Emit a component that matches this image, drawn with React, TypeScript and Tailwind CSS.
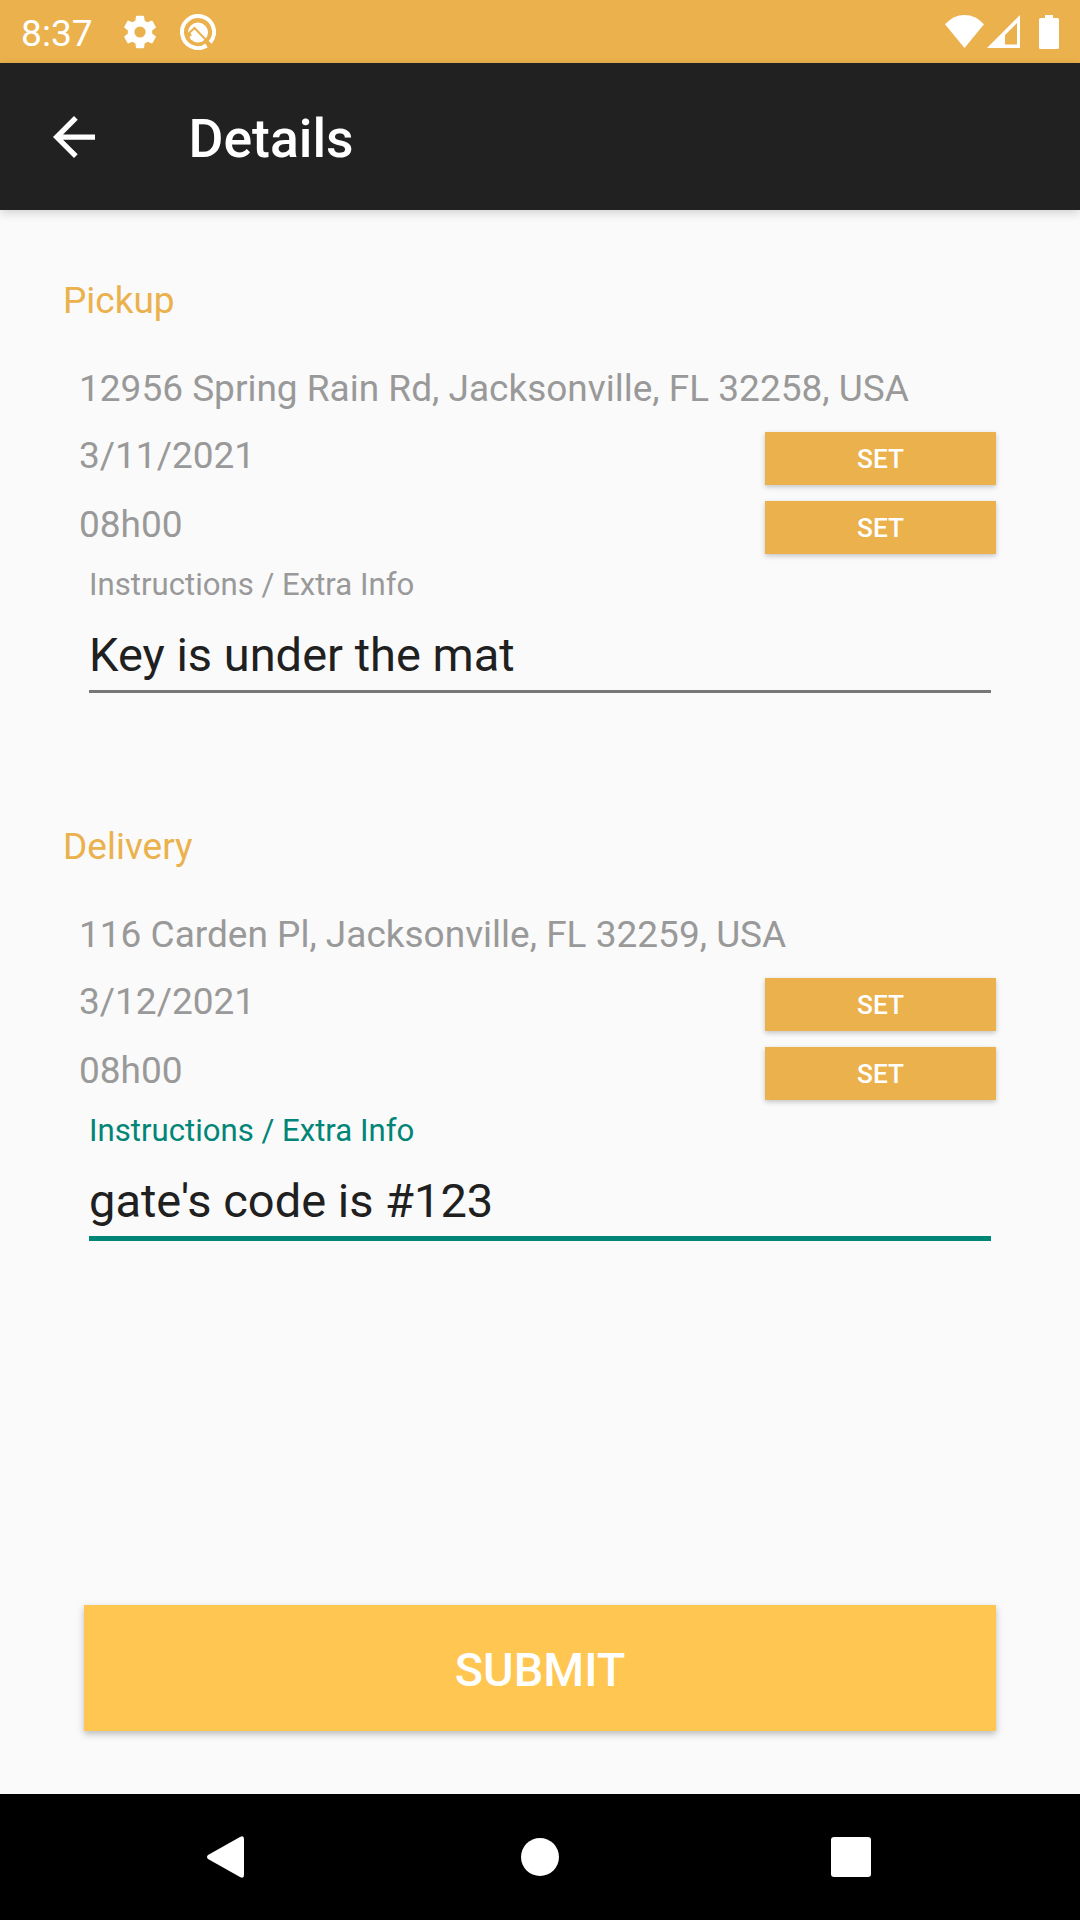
import React from 'react';

type Section = { title: string; address: string; date: string; time: string; note: string; active?: boolean };

const sections: Section[] = [
  { title: 'Pickup', address: '12956 Spring Rain Rd, Jacksonville, FL 32258, USA', date: '3/11/2021', time: '08h00', note: 'Key is under the mat' },
  { title: 'Delivery', address: '116 Carden Pl, Jacksonville, FL 32259, USA', date: '3/12/2021', time: '08h00', note: "gate's code is #123", active: true },
];

function SetButton() {
  return (
    <button className="h-[53px] w-[231px] bg-[#eab14d] pt-[2px] text-[26.25px] leading-[51px] font-medium text-white shadow-[0_2px_5px_rgba(0,0,0,0.22)]">SET</button>
  );
}

function Block({ title, address, date, time, note, active }: Section) {
  return (
    <section className="h-[546px] text-[37px] leading-[43px] text-[#999]">
      <h2 className="pl-[63px] text-[#eab14d]">{title}</h2>
      <p className="mt-[45px] pl-[79px] whitespace-nowrap">{address}</p>
      <div className="mt-[22px] flex h-[53px] justify-between pr-[84px] pl-[79px]"><span className="pt-[2px]">{date}</span><SetButton /></div>
      <div className="mt-[16px] flex h-[53px] justify-between pr-[84px] pl-[79px]"><span className="pt-[2px]">{time}</span><SetButton /></div>
      <div className="mr-[89px] ml-[89px]">
        <div className={active ? 'mt-[12px] text-[31.15px] leading-[37px] text-[#018577]' : 'mt-[12px] text-[31.15px] leading-[37px]'}>Instructions / Extra Info</div>
        <div className={active ? 'mt-[24px] h-[68px] border-b-[5px] border-[#018577] text-[47px] leading-[55px] text-[#202020]' : 'mt-[24px] h-[66px] border-b-[3px] border-[#777] text-[47px] leading-[55px] text-[#202020]'}>{note}</div>
      </div>
    </section>
  );
}

export default function App() {
  return (
    <main className="flex h-[1920px] w-[1080px] flex-col overflow-hidden bg-[#fafafa] font-['Roboto',sans-serif]">
      <header className="flex h-[63px] items-center bg-[#eab14d] pr-[21px] pl-[21px] text-white">
        <span className="w-[102px] pt-[4px] text-[37.2px] leading-[59px]">8:37</span>
        <svg width="34" height="34" viewBox="2 2 20 20" fill="#fff"><path d="M19.14 12.94c.04-.3.06-.61.06-.94s-.02-.64-.07-.94l2.03-1.58a.49.49 0 0 0 .12-.61l-1.92-3.32a.49.49 0 0 0-.59-.22l-2.39.96a7 7 0 0 0-1.62-.94L14.4 2.81a.48.48 0 0 0-.48-.41h-3.84c-.24 0-.43.17-.47.41l-.36 2.54c-.59.24-1.13.57-1.62.94l-2.39-.96c-.22-.08-.47 0-.59.22L2.74 8.87c-.12.21-.08.47.12.61l2.03 1.58a6 6 0 0 0 0 1.88l-2.03 1.58a.49.49 0 0 0-.12.61l1.92 3.32c.12.22.37.29.59.22l2.39-.96c.5.38 1.03.7 1.62.94l.36 2.54c.05.24.24.41.48.41h3.84c.24 0 .44-.17.47-.41l.36-2.54c.59-.24 1.13-.56 1.62-.94l2.39.96c.22.08.47 0 .59-.22l1.92-3.32a.49.49 0 0 0-.12-.61zM12 15.3a3.3 3.3 0 1 1 0-6.6 3.3 3.3 0 0 1 0 6.600z"/></svg>
        <svg className="ml-[23px]" width="36" height="36" viewBox="0 0 36 36" fill="none">
          <path d="M26.5 31.600A16 16 0 1 1 30.2 28.400" stroke="#fff" strokeWidth="4"/>
          <path d="M23 30.500l2.500-.5 2 3.500-3 1z" fill="#fff"/>
          <circle cx="18" cy="18.500" r="10" fill="#fff"/>
          <path d="M6 22l8.500-8L28 28" stroke="#eab14d" strokeWidth="2"/>
          <path d="M7 25l5-4-3-3z" fill="#eab14d"/>
        </svg>
        <svg className="ml-auto" width="39" height="33" viewBox="0 0 39 33" fill="#fff"><path d="M0 9.300Q8.500 0 19.500 0T39 9.300L19.500 33z"/></svg>
        <svg className="ml-[3px]" width="33" height="33" viewBox="0 0 33 33" fill="#fff"><path d="M33 0v33H0zM30 8 18 20v9.500h12z" fillRule="evenodd"/></svg>
        <svg className="ml-[19px]" width="20" height="34" viewBox="0 0 20 34" fill="#fff"><path d="M6 0h8v3h4.500q1.500 0 1.500 1.500v28q0 1.500-1.500 1.500h-17q-1.500 0-1.500-1.500v-28q0-1.500 1.500-1.500H6z"/></svg>
      </header>
      <nav className="flex h-[147px] items-center bg-[#212121] pl-[52.5px] text-white shadow-[0_3px_9px_rgba(0,0,0,0.16)]">
        <svg width="42" height="42" viewBox="4 4 16 16" fill="#fff"><path d="M20 11H7.830l5.590-5.590L12 4l-8 8 8 8 1.410-1.410L7.830 13H20z"/></svg>
        <h1 className="ml-[94px] pt-[5px] text-[53.5px] font-medium">Details</h1>
      </nav>
      <div className="h-[1584px] pt-[69px]">
        {sections.map((section) => <Block key={section.title} {...section} />)}
        <button className="mt-[234px] ml-[84px] h-[126px] w-[912px] bg-[#ffc651] pt-[5px] text-[46.8px] font-medium text-white shadow-[0_3px_7px_rgba(0,0,0,0.26)]">SUBMIT</button>
      </div>
      <footer className="flex h-[126px] items-center bg-black pl-[207px]">
        <svg width="37" height="42" viewBox="0 0 37 42"><path d="M33 1Q37-1 37 3v36q0 4-4 2L1 23q-2-2 0-4z" fill="#fff"/></svg>
        <div className="ml-[277px] h-[38px] w-[38px] rounded-full bg-white"/>
        <div className="ml-[272px] h-[40px] w-[40px] rounded-[3px] bg-white"/>
      </footer>
    </main>
  );
}
